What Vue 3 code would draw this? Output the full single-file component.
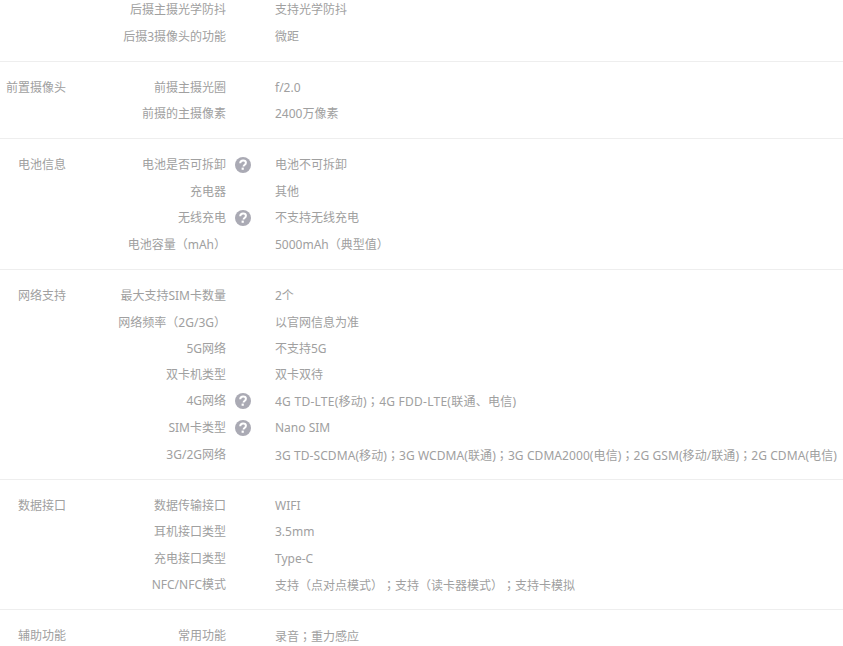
<script setup>
const sections = [
  { title: '', rows: [
    { label: '后摄主摄光学防抖', value: '支持光学防抖' },
    { label: '后摄3摄像头的功能', value: '微距' },
  ] },
  { title: '前置摄像头', rows: [
    { label: '前摄主摄光圈', value: 'f/2.0' },
    { label: '前摄的主摄像素', value: '2400万像素' },
  ] },
  { title: '电池信息', rows: [
    { label: '电池是否可拆卸', value: '电池不可拆卸', help: true },
    { label: '充电器', value: '其他' },
    { label: '无线充电', value: '不支持无线充电', help: true },
    { label: '电池容量（mAh）', value: '5000mAh（典型值）' },
  ] },
  { title: '网络支持', rows: [
    { label: '最大支持SIM卡数量', value: '2个' },
    { label: '网络频率（2G/3G）', value: '以官网信息为准' },
    { label: '5G网络', value: '不支持5G' },
    { label: '双卡机类型', value: '双卡双待' },
    { label: '4G网络', value: ['4G TD-LTE(移动)', '4G FDD-LTE(联通、电信)'], help: true, spread: 'wide' },
    { label: 'SIM卡类型', value: 'Nano SIM', help: true },
    { label: '3G/2G网络', value: ['3G TD-SCDMA(移动)', '3G WCDMA(联通)', '3G CDMA2000(电信)', '2G GSM(移动/联通)', '2G CDMA(电信)'], spread: 'slight' },
  ] },
  { title: '数据接口', rows: [
    { label: '数据传输接口', value: 'WIFI' },
    { label: '耳机接口类型', value: '3.5mm' },
    { label: '充电接口类型', value: 'Type-C' },
    { label: 'NFC/NFC模式', value: ['支持（点对点模式）', '支持（读卡器模式）', '支持卡模拟'] },
  ] },
  { title: '辅助功能', rows: [
    { label: '常用功能', value: ['录音', '重力感应'] },
  ] },
].map((s) => ({
  ...s,
  rows: s.rows.map((r) => ({ ...r, parts: [].concat(r.value) })),
}))
</script>

<template>
  <div class="page">
    <div class="list">
      <section v-for="(s, i) in sections" :key="i" class="section">
        <div class="title">{{ s.title }}</div>
        <div class="rows">
          <div v-for="r in s.rows" :key="r.label" class="row" :class="{ 'has-help': r.help }">
            <div class="label">{{ r.label }}</div>
            <div class="help">
              <svg v-if="r.help" width="16" height="16" viewBox="0 0 16 16">
                <circle cx="8" cy="8" r="8" fill="#aaaab4" />
                <path d="M5.2 6.2C5.3 4.5 6.5 3.5 8.1 3.5c1.7 0 2.8 1 2.8 2.3 0 1-.5 1.6-1.4 2.2-.7.5-.9.9-.9 1.6" fill="none" stroke="#fff" stroke-width="2" />
                <rect x="6.6" y="10.6" width="2.2" height="2.2" fill="#fff" />
              </svg>
            </div>
            <div class="value" :class="r.spread">
              <template v-for="(p, k) in r.parts" :key="k">
                <span v-if="k" class="sep">；</span>{{ p }}
              </template>
            </div>
          </div>
        </div>
      </section>
    </div>
  </div>
</template>

<style scoped>
.page {
  height: 646px;
  overflow: hidden;
  background: #fff;
  font-family: "Noto Sans", "Noto Sans CJK SC", sans-serif;
  font-size: 12px;
  color: #a0a0a0;
  text-spacing-trim: space-all;
}
.list {
  margin-top: -15.6px;
}
.section {
  display: flex;
  padding: 12px 0;
  border-top: 1px solid #eee;
}
.section:first-child {
  border-top: 0;
}
.title {
  width: 66px;
  flex: none;
  padding-top: 1px;
  text-align: right;
  line-height: 26.25px;
}
.rows {
  flex: 1;
  min-width: 0;
}
.row {
  display: flex;
  align-items: flex-start;
  height: 26.25px;
  line-height: 26.25px;
  white-space: nowrap;
}
.row.has-help {
  height: 26.75px;
}
.label {
  width: 160px;
  flex: none;
  padding-top: 1px;
  text-align: right;
}
.help {
  width: 49px;
  flex: none;
  align-self: center;
  display: flex;
  align-items: center;
  padding-left: 9px;
  box-sizing: border-box;
}
.value {
  flex: none;
  padding-top: 1px;
}
.value.wide {
  letter-spacing: 0.25px;
}
.value.slight {
  letter-spacing: 0.08px;
}
.sep {
  font-family: "Noto Sans CJK TC", sans-serif;
}
</style>

<style>
html, body { margin: 0; overflow: hidden; }
</style>
